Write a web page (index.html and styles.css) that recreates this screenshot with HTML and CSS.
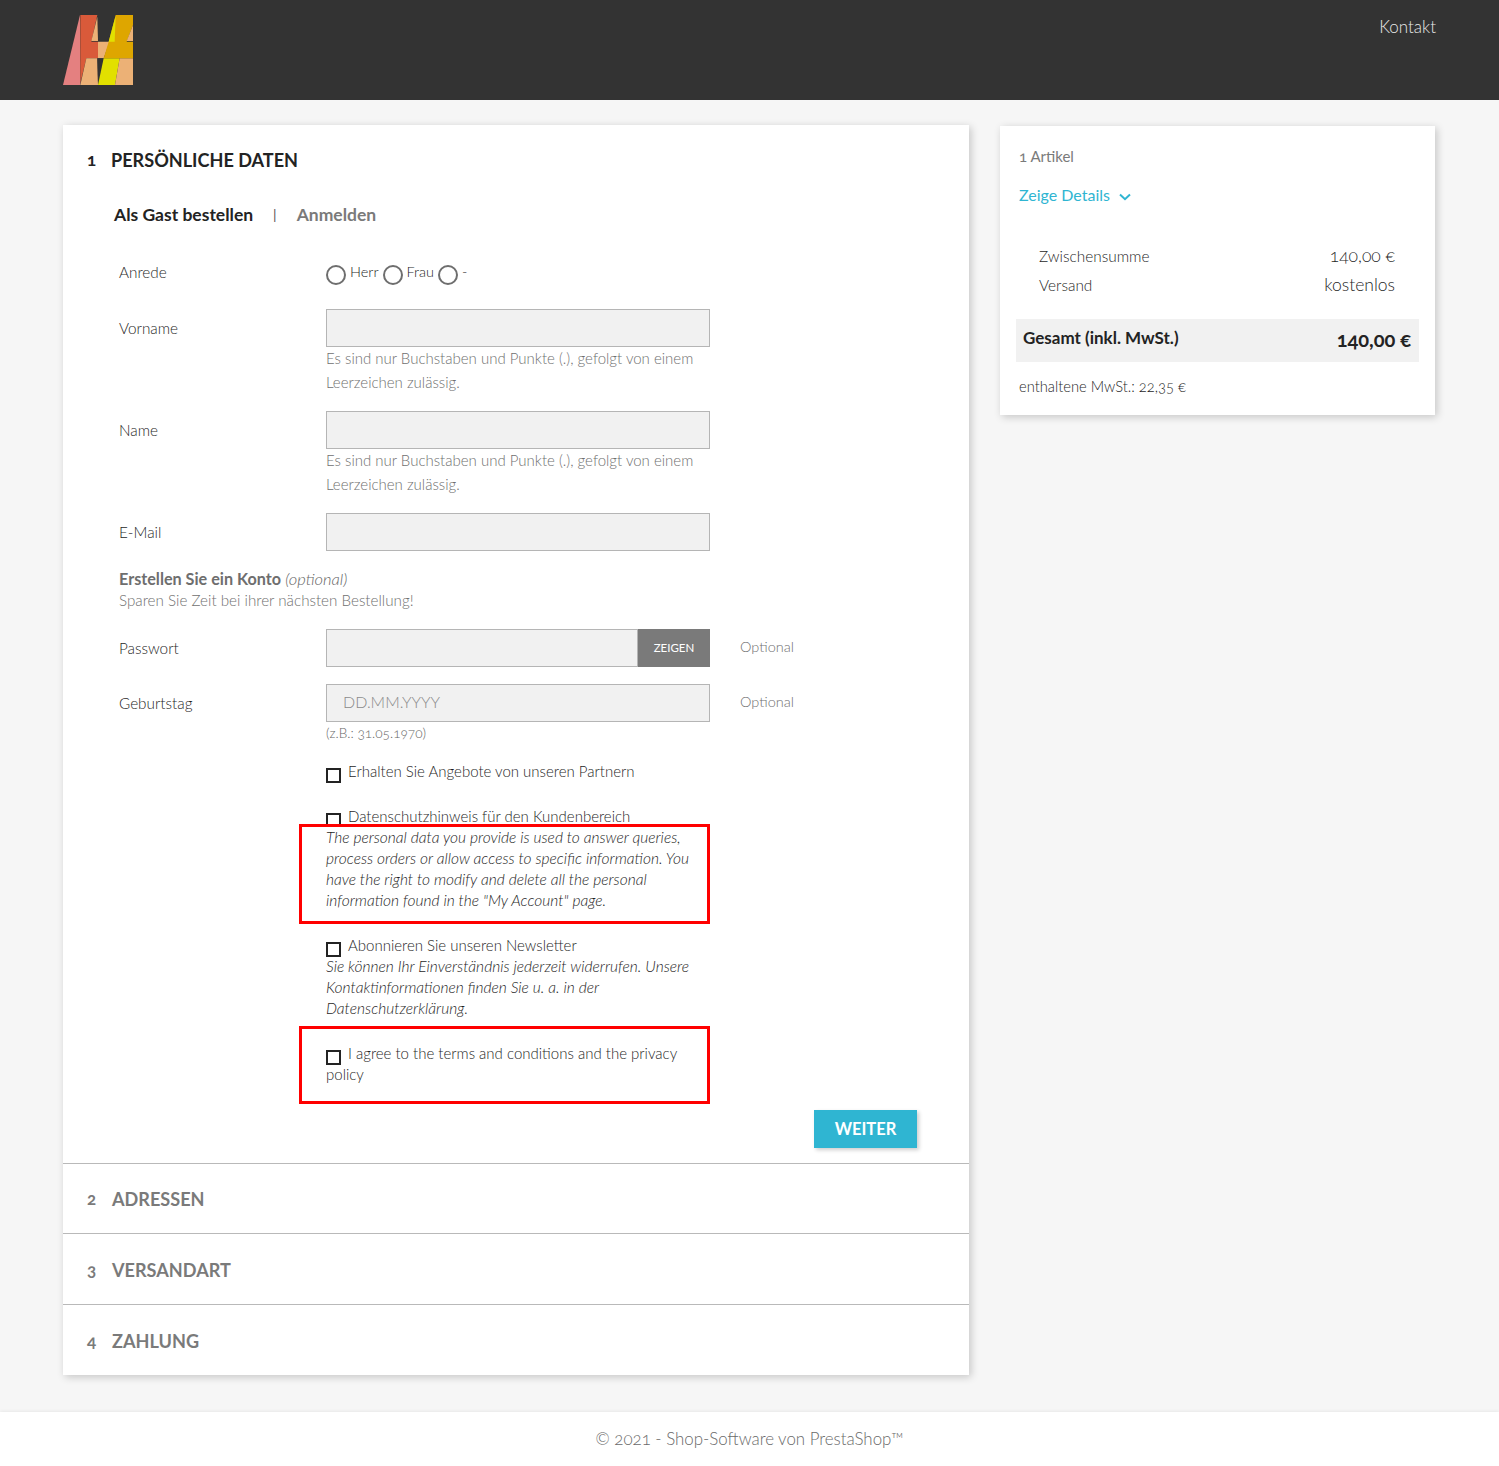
FILE: index.html
```html
<!DOCTYPE html>
<html lang="de">
<head>
<meta charset="utf-8">
<title>Bestellung</title>
<link rel="stylesheet" href="styles.css">
</head>
<body>
<header class="topbar">
  <svg class="logo" viewBox="0 0 210 210" aria-label="Logo">
    <polygon fill="#e48080" points="0,210 51,0 52,210"/>
    <polygon fill="#d95a3a" points="52,0 103,0 85,80 105,80 105,130 70,130 52,205"/>
    <polygon fill="#ecb176" points="103,5 85,78 105,78"/>
    <polygon fill="#ecb176" points="105,80 140,80 122,130 105,130"/>
    <polygon fill="#ecb176" points="70,130 103,130 105,210 52,210"/>
    <polygon fill="#333333" points="103,130 122,130 105,205"/>
    <polygon fill="#e2e000" points="122,130 170,130 156,210 105,210"/>
    <polygon fill="#ecb176" points="170,130 210,130 210,210 156,210"/>
    <polygon fill="#dea600" points="158,0 210,0 210,30 191,80 210,80 210,130 122,130 137,80"/>
    <polygon fill="#ecb176" points="210,30 191,78 210,78"/>
    <polygon fill="#e2e000" points="158,2 137,80 155,80"/>
  </svg>
  <a class="top-link" href="#">Kontakt</a>
</header>

<main class="page">
  <div class="checkout">
    <section class="step step-open">
      <h1 class="step-title"><span class="step-no">1</span>PERSÖNLICHE DATEN</h1>
      <div class="tabs">
        <a class="tab tab-active" href="#">Als Gast bestellen</a>
        <span class="tab-sep">|</span>
        <a class="tab" href="#">Anmelden</a>
      </div>
      <form class="form">
        <div class="row row-radio">
          <label class="label label-flat">Anrede</label>
          <div class="radios">
            <input class="radio" type="radio" name="g"><span>Herr</span>
            <input class="radio" type="radio" name="g"><span>Frau</span>
            <input class="radio" type="radio" name="g"><span>-</span>
          </div>
        </div>
        <div class="row">
          <label class="label">Vorname</label>
          <div><input class="field" type="text">
            <p class="hint">Es sind nur Buchstaben und Punkte (.), gefolgt von einem Leerzeichen zulässig.</p></div>
        </div>
        <div class="row">
          <label class="label">Name</label>
          <div><input class="field" type="text">
            <p class="hint">Es sind nur Buchstaben und Punkte (.), gefolgt von einem Leerzeichen zulässig.</p></div>
        </div>
        <div class="row">
          <label class="label">E-Mail</label>
          <div><input class="field" type="text"></div>
        </div>
        <div class="account">
          <p><b>Erstellen Sie ein Konto</b> <i>(optional)</i></p>
          <p class="account-sub">Sparen Sie Zeit bei ihrer nächsten Bestellung!</p>
        </div>
        <div class="row row-pass">
          <label class="label">Passwort</label>
          <div class="pass"><input class="field field-pass" type="password"><button class="show" type="button">ZEIGEN</button></div>
          <span class="optional">Optional</span>
        </div>
        <div class="row row-birth">
          <label class="label">Geburtstag</label>
          <div><input class="field field-date" type="text" placeholder="DD.MM.YYYY">
            <p class="hint hint-date">(z.B.: 31.05.1970)</p></div>
          <span class="optional">Optional</span>
        </div>
        <div class="checks">
          <p class="check"><input class="box" type="checkbox">Erhalten Sie Angebote von unseren Partnern</p>
          <p class="check check-privacy"><input class="box" type="checkbox">Datenschutzhinweis für den Kundenbereich</p>
          <div class="marked marked-privacy">
            <em>The personal data you provide is used to answer queries, process orders or allow access to specific information. You have the right to modify and delete all the personal information found in the "My Account" page.</em>
          </div>
          <p class="check check-news"><input class="box" type="checkbox">Abonnieren Sie unseren Newsletter</p>
          <em class="news-text">Sie können Ihr Einverständnis jederzeit widerrufen. Unsere Kontaktinformationen finden Sie u. a. in der Datenschutzerklärung.</em>
          <div class="marked marked-terms">
            <p class="check"><input class="box" type="checkbox">I agree to the terms and conditions and the privacy policy</p>
          </div>
        </div>
        <div class="actions"><button class="next" type="button">WEITER</button></div>
      </form>
    </section>
    <section class="step"><h2 class="step-title step-closed"><span class="step-no">2</span>ADRESSEN</h2></section>
    <section class="step"><h2 class="step-title step-closed step-tall"><span class="step-no">3</span>VERSANDART</h2></section>
    <section class="step"><h2 class="step-title step-closed step-tall"><span class="step-no">4</span>ZAHLUNG</h2></section>
  </div>

  <aside class="summary">
    <p class="items">1 Artikel</p>
    <a class="details" href="#">Zeige Details
      <svg class="chev" viewBox="0 0 12 8"><path d="M1 1.5 6 6.2 11 1.5" fill="none" stroke="#2fb5d2" stroke-width="2"/></svg>
    </a>
    <div class="line line-sub"><span>Zwischensumme</span><span class="num">140,00 €</span></div>
    <div class="line line-ship"><span>Versand</span><span class="ship-val">kostenlos</span></div>
    <div class="total"><span class="total-label">Gesamt (inkl. MwSt.)</span><span class="total-val">140,00 €</span></div>
    <p class="tax">enthaltene MwSt.: 22,35 €</p>
  </aside>
</main>

<footer class="foot">© 2021 - Shop-Software von PrestaShop™</footer>
</body>
</html>
```

FILE: styles.css
```css
* { box-sizing: border-box; }
html, body { margin: 0; padding: 0; }
body {
  background: #f6f6f6;
  color: #1f1f1f;
  font-family: "Lato", "Liberation Sans", sans-serif;
  font-size: 15px;
  font-weight: 300;
  line-height: 24px;
  font-variant-numeric: oldstyle-nums;
}
p { margin: 0; }
a { text-decoration: none; color: inherit; }

.topbar {
  height: 100px;
  background: #333333;
  padding: 15px 63px 0;
  display: flex;
  justify-content: space-between;
  align-items: flex-start;
}
.logo { width: 70px; height: 70px; display: block; }
.top-link { color: #e8e8e8; font-size: 17px; line-height: 24px; }

.page {
  display: flex;
  align-items: flex-start;
  gap: 31px;
  padding: 25px 63px 0;
}
.checkout {
  width: 906px;
  background: #fff;
  box-shadow: 2px 2px 8px rgba(0, 0, 0, .2);
}
.step + .step { border-top: 1px solid #b9b9b9; }
.step-open { padding-top: 23px; }
.step-title {
  margin: 0 0 0 24px;
  font-size: 18.1px;
  line-height: 24px;
  font-weight: 700;
  color: #232323;
  display: flex;
}
.step-no { width: 24px; font-size: 17px; }
.step-closed {
  color: #7a7a7a;
  padding: 23px 0 22px;
  margin-left: 24px;
}
.step-tall { padding-top: 24px; }
.step-closed .step-no { width: 25px; }

.tabs {
  margin: 31px 0 0 51px;
  display: flex;
  font-size: 17.5px;
  font-weight: 700;
  color: #7a7a7a;
}
.tab-active { color: #232323; }
.tab-sep { margin: 0 20px; font-weight: 400; color: #555; font-size: 14px; }

.form { padding: 34px 52px 15px 56px; }
.row {
  display: grid;
  grid-template-columns: 207px 384px auto;
  margin-bottom: 16px;
}
.row-radio { margin-bottom: 24px; }
.row-pass { margin-bottom: 17px; }
.label { padding-top: 7px; font-size: 15.3px; }
.label-flat { padding-top: 0; margin-top: -1px; }
.radios { display: flex; align-items: center; gap: 4px; }
.radios span { margin-top: -2px; font-size: 14.5px; }
.radio {
  appearance: none;
  width: 20px;
  height: 20px;
  margin: 4px 0 0;
  border: 2px solid #6e6e6e;
  border-radius: 50%;
}
.field {
  display: block;
  width: 100%;
  height: 38px;
  background: #f1f1f1;
  border: 1px solid #b5b5b5;
  padding: 0 16px 2px;
  font: inherit;
  outline: 0;
}
.field-date { font-size: 16px; padding-bottom: 3px; }
.field-date::placeholder { color: #8a8a8a; opacity: 1; }
.hint { color: #707070; margin: -1px 0 1px; }
.hint-date { font-size: 13.6px; color: #666; }
.pass { display: flex; }
.field-pass { flex: 1; width: auto; min-width: 0; }
.show {
  width: 72px;
  border: 0;
  background: #7a7a7a;
  color: #fff;
  font: 400 11.5px "Lato", sans-serif;
  padding: 0 0 2px;
}
.optional { padding: 6px 0 0 30px; color: #707070; font-size: 14.5px; }
.account { line-height: 22px; margin: 17px 0 18px; color: #707070; }
.account b { font-weight: 700; font-size: 16.2px; color: #6e6e6e; }
.account i { font-size: 16.5px; color: #666; }
.account-sub { font-size: 15.2px; margin-top: -1px; }
.checks { margin: -1px 0 0 207px; width: 384px; line-height: 21px; }
.box {
  appearance: none;
  width: 15px;
  height: 15px;
  margin: 0 7px -1px 0;
  border: 2px solid #232323;
  vertical-align: -5px;
}
.check-privacy { margin-top: 24px; }
.marked {
  position: relative;
  background: #fff;
  margin-left: -27px;
  width: 411px;
  border: 3px solid #ff0000;
  padding-left: 24px;
  padding-right: 14px;
}
.marked-privacy { margin-top: -3px; padding-bottom: 10px; }
.marked-terms { margin-top: 7px; padding-top: 14px; padding-bottom: 16px; }
.check-news { margin-top: 11px; }
.news-text, .marked em { display: block; font-size: 15.55px; }
.actions { display: flex; justify-content: flex-end; margin-top: 6px; }
.next {
  width: 103px;
  height: 38px;
  border: 0;
  background: #2fb5d2;
  color: #fff;
  font: 700 16.5px "Lato", sans-serif;
  padding: 0 0 1px;
  box-shadow: 2px 2px 4px rgba(0, 0, 0, .2);
}

.summary {
  width: 435px;
  margin-top: 1px;
  height: 289px;
  background: #fff;
  box-shadow: 2px 2px 8px rgba(0, 0, 0, .2);
  padding: 18px 16px 0;
}
.items { color: #7a7a7a; padding-left: 3px; font-weight: 400; }
.details {
  display: flex;
  align-items: center;
  gap: 9px;
  margin: 15px 0 0 3px;
  color: #2fb5d2;
  font-size: 16px;
  font-weight: 400;
}
.chev { width: 12px; height: 8px; margin-top: 3px; }
.line {
  display: flex;
  justify-content: space-between;
  padding: 0 24px 0 23px;
  font-size: 15.4px;
}
.line-sub { margin-top: 37px; }
.line-ship { margin-top: 5px; }
.num, .ship-val { font-size: 17.5px; }
.total {
  display: flex;
  justify-content: space-between;
  height: 43px;
  margin-top: 22px;
  background: #f1f1f1;
  padding: 7px 8px 0 7px;
  color: #232323;
  font-weight: 700;
}
.total-label { font-size: 17px; }
.total-val { font-size: 20px; padding-top: 1px; }
.tax { padding: 12px 0 0 3px; font-size: 14.75px; }

.foot {
  margin-top: 37px;
  height: 54px;
  background: #fff;
  text-align: center;
  line-height: 54px;
  font-size: 16.9px;
  color: #6a6a6a;
  box-shadow: 0 -1px 3px rgba(0, 0, 0, .06);
}
```
